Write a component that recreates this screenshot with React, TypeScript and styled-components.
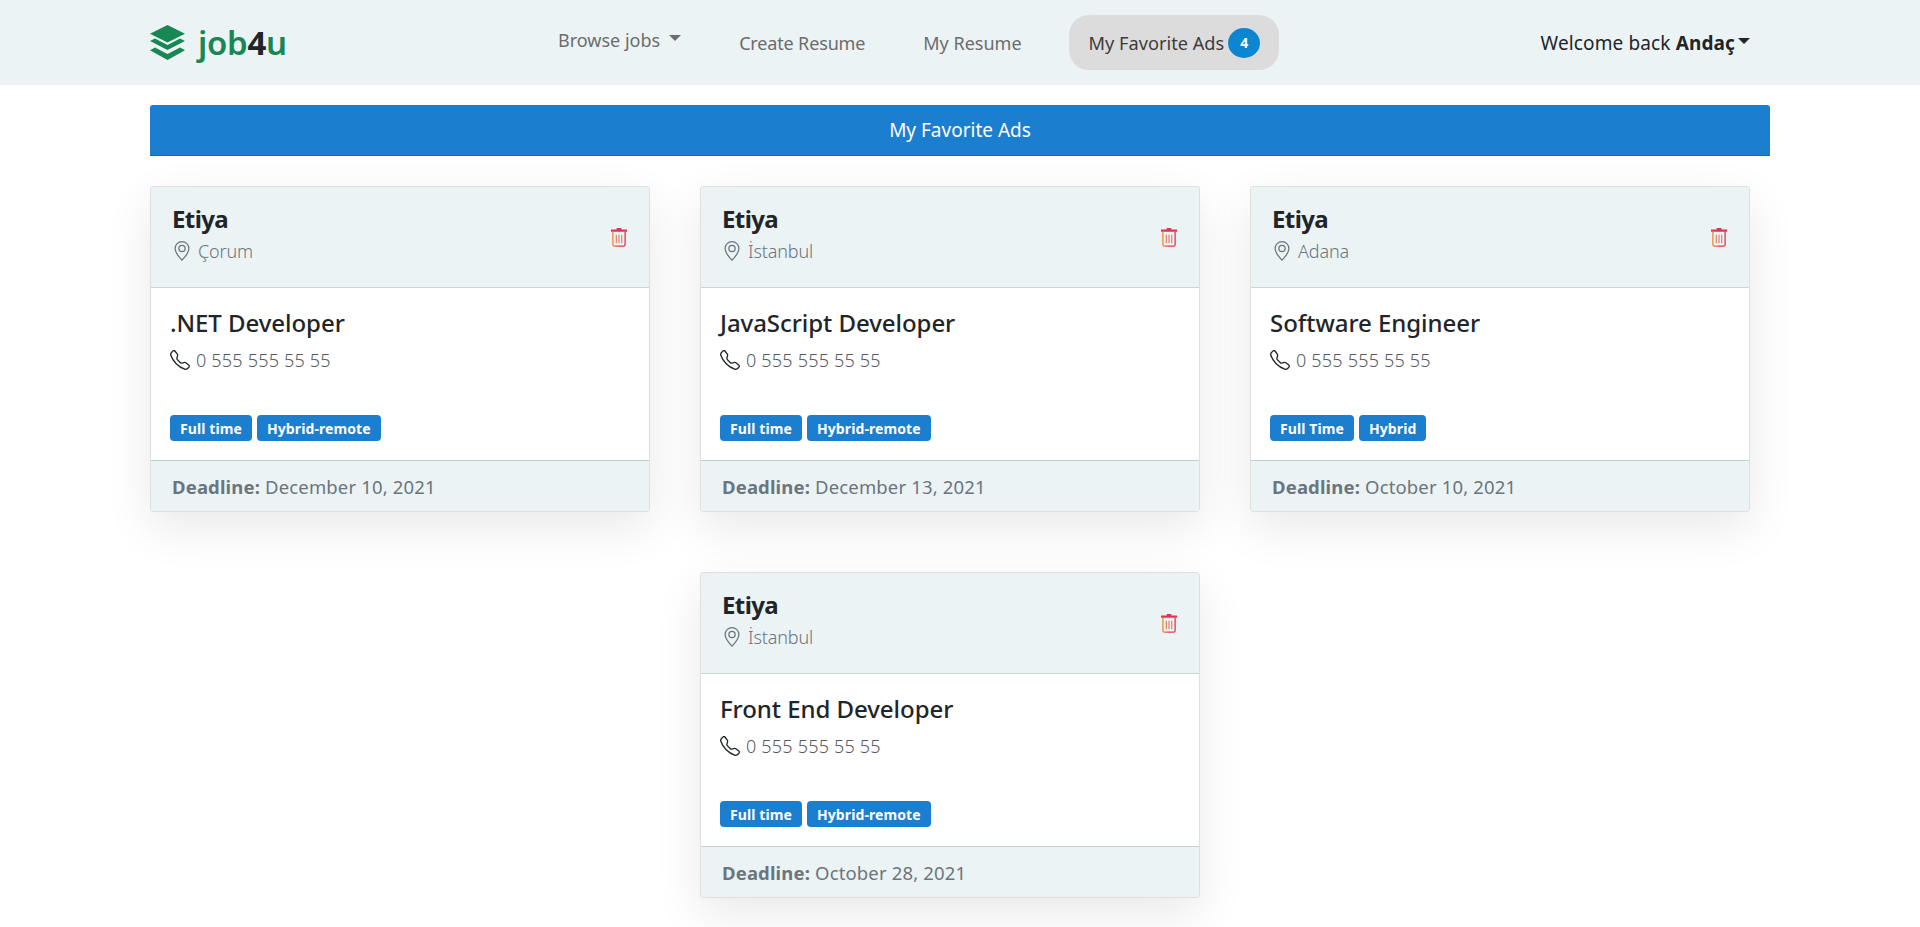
import React from "react";
import styled, { createGlobalStyle } from "styled-components";
import { BsGeoAlt, BsTelephone } from "react-icons/bs";

const Global = createGlobalStyle`
  * { box-sizing: border-box; }
  body { margin: 0; background: #fff; color: #212529; font-family: "Noto Sans", "Open Sans", sans-serif; font-size: 16px; }
`;

const NavBar = styled.nav`
  height: 85px;
  background: #ebf3f5;
  padding: 0 150px;
  display: flex;
  align-items: center;
`;
const Brand = styled.a`
  display: flex;
  align-items: center;
  gap: 13px;
  flex: 0 0 370px;
  font-size: 33px;
  font-weight: 600;
  color: #198754;
  letter-spacing: -0.3px;
`;
const Four = styled.span`
  color: #212529;
  font-weight: 700;
`;
const NavLinks = styled.div`
  display: flex;
  align-items: center;
`;
const NavLink = styled.a<{ $up?: boolean; $active?: boolean; $tight?: boolean }>`
  display: flex;
  align-items: center;
  font-size: ${(p) => (p.$active ? "18.2px" : "18px")};
  letter-spacing: ${(p) => (p.$tight ? "-0.15px" : "0")};
  color: ${(p) => (p.$active ? "#3f3b3b" : "#6c6c6c")};
  height: 55px;
  padding: ${(p) => (p.$active ? "0 19px 0 20px" : "0 20px")};
  margin-left: ${(p) => (p.$active ? "27px" : "18px")};
  border-radius: 20px;
  background: ${(p) => (p.$active ? "#dcdcdc" : "transparent")};
  transform: ${(p) => (p.$up ? "translateY(-3px)" : "none")};
`;
const Caret = styled.i<{ $dark?: boolean }>`
  display: inline-block;
  margin-left: ${(p) => (p.$dark ? "3px" : "9px")};
  margin-top: -4px;
  border-top: 6px solid ${(p) => (p.$dark ? "#212529" : "#6c6c6c")};
  border-left: 6px solid transparent;
  border-right: 6px solid transparent;
`;
const Badge = styled.span`
  width: 32px;
  height: 30px;
  margin-left: 4px;
  border-radius: 50%;
  background: #0d86d1;
  color: #fff;
  font-size: 14px;
  font-weight: 700;
  display: flex;
  align-items: center;
  justify-content: center;
`;
const UserMenu = styled.div`
  display: flex;
  align-items: center;
  margin-left: auto;
  margin-right: 20px;
  font-size: 19px;
  letter-spacing: 0.13px;
  color: #212529;
  b { font-weight: 700; margin-left: 5px; }
`;
const Main = styled.main`
  min-height: 842px;
  padding: 20px 150px 0;
`;
const Banner = styled.div`
  height: 51px;
  background: #1c7ecf;
  border-bottom: 1px solid #166ca8;
  border-radius: 3px 3px 0 0;
  color: #fff;
  font-size: 19px;
  display: flex;
  align-items: center;
  justify-content: center;
`;
const Grid = styled.div`
  width: 1600px;
  margin-top: 30px;
  display: flex;
  flex-wrap: wrap;
  justify-content: center;
  gap: 60px 50px;
`;
const Card = styled.article`
  width: 500px;
  height: 326px;
  border: 1px solid rgba(0, 0, 0, 0.125);
  border-radius: 4px;
  box-shadow: 0 16px 48px rgba(0, 0, 0, 0.09);
  background: #fff;
  display: flex;
  flex-direction: column;
`;
const CardHead = styled.header`
  height: 101px;
  background: #ebf3f5;
  border-bottom: 1px solid rgba(0, 0, 0, 0.125);
  border-radius: 3px 3px 0 0;
  padding: 0 22px 0 21px;
  display: flex;
  justify-content: space-between;
  align-items: center;
`;
const HeadText = styled.div`
  margin-top: -5px;
`;
const Company = styled.h4`
  margin: 0;
  font-size: 24px;
  line-height: 30px;
  font-weight: 700;
  letter-spacing: -0.6px;
`;
const Location = styled.div`
  display: flex;
  align-items: center;
  gap: 6px;
  margin-top: 2px;
  font-size: 18px;
  font-weight: 300;
  line-height: 30px;
  letter-spacing: -0.15px;
  color: #6c757d;
`;
const CardBody = styled.div`
  flex: 1;
  padding: 17px 20px 0 19px;
  display: flex;
  flex-direction: column;
`;
const Title = styled.h5`
  margin: 0;
  font-size: 24px;
  line-height: 36px;
  font-weight: 500;
  letter-spacing: -0.05px;
`;
const Phone = styled.div`
  display: flex;
  align-items: center;
  gap: 6px;
  margin-top: 1px;
  font-size: 18px;
  font-weight: 300;
  line-height: 36px;
  letter-spacing: 0.2px;
  color: #55595e;
`;
const Tags = styled.div`
  display: flex;
  gap: 5px;
  margin-top: 37px;
`;
const Tag = styled.span`
  height: 26px;
  padding: 0 10px;
  border-radius: 4px;
  background: #1c7ecf;
  color: #fff;
  font-size: 14px;
  font-weight: 700;
  letter-spacing: 0.1px;
  display: flex;
  align-items: center;
`;
const CardFoot = styled.footer`
  height: 51px;
  background: #ebf3f5;
  border-top: 1px solid rgba(0, 0, 0, 0.15);
  border-radius: 0 0 3px 3px;
  padding: 0 21px;
  display: flex;
  align-items: center;
  font-size: 18.5px;
  letter-spacing: 0.15px;
  color: #6c757d;
  b { font-weight: 700; margin-right: 5px; }
`;

const Logo = () => (
  <svg width="35" height="35" viewBox="0 0 35 35">
    <path fill="#198754" d="M17.5 0 35 8.7 17.5 17.5 0 8.7z" />
    <path fill="#198754" d="M5 13.6 17.5 20 30 13.6 35 16 17.5 25 0 16z" />
    <path fill="#198754" d="M5 22.6 17.5 29 30 22.6 35 25.2 17.5 35 0 25.2z" />
  </svg>
);

const Trash = () => (
  <svg width="16" height="19" viewBox="0 0 17 20" fill="none">
    <defs>
      <linearGradient id="trashGrad" x1="0" x2="1" y1="0" y2="0">
        <stop offset="0" stopColor="#f08a3c" />
        <stop offset="0.5" stopColor="#e8344e" />
        <stop offset="1" stopColor="#e8344e" />
      </linearGradient>
    </defs>
    <path fill="#e43350" d="M6 0h5v1.6h6V4H0V1.6h6z" />
    <path stroke="url(#trashGrad)" strokeWidth="1.4" d="M2 4v13.5c0 1 .6 1.7 1.6 1.7h9.8c1 0 1.6-.7 1.6-1.7V4" />
    <path stroke="#e0704f" strokeWidth="1.1" d="M5.6 7v9M8.5 7v9M11.4 7v9" />
  </svg>
);

type Ad = { city: string; title: string; type: string; mode: string; deadline: string };
const ads: Ad[] = [
  { city: "Çorum", title: ".NET Developer", type: "Full time", mode: "Hybrid-remote", deadline: "December 10, 2021" },
  { city: "İstanbul", title: "JavaScript Developer", type: "Full time", mode: "Hybrid-remote", deadline: "December 13, 2021" },
  { city: "Adana", title: "Software Engineer", type: "Full Time", mode: "Hybrid", deadline: "October 10, 2021" },
  { city: "İstanbul", title: "Front End Developer", type: "Full time", mode: "Hybrid-remote", deadline: "October 28, 2021" },
];

export default function App() {
  return (
    <>
      <Global />
      <NavBar>
        <Brand>
          <Logo />
          <span>
            job<Four>4</Four>u
          </span>
        </Brand>
        <NavLinks>
          <NavLink $up>
            Browse jobs
            <Caret />
          </NavLink>
          <NavLink $tight>Create Resume</NavLink>
          <NavLink>My Resume</NavLink>
          <NavLink $active>
            My Favorite Ads
            <Badge>4</Badge>
          </NavLink>
        </NavLinks>
        <UserMenu>
          Welcome back <b>Andaç</b>
          <Caret $dark />
        </UserMenu>
      </NavBar>
      <Main>
        <Banner>My Favorite Ads</Banner>
        <Grid>
          {ads.map((ad) => (
            <Card key={ad.title}>
              <CardHead>
                <HeadText>
                  <Company>Etiya</Company>
                  <Location>
                    <BsGeoAlt size={20} />
                    {ad.city}
                  </Location>
                </HeadText>
                <Trash />
              </CardHead>
              <CardBody>
                <Title>{ad.title}</Title>
                <Phone>
                  <BsTelephone size={20} color="#212529" />
                  0 555 555 55 55
                </Phone>
                <Tags>
                  <Tag>{ad.type}</Tag>
                  <Tag>{ad.mode}</Tag>
                </Tags>
              </CardBody>
              <CardFoot>
                <b>Deadline:</b> {ad.deadline}
              </CardFoot>
            </Card>
          ))}
        </Grid>
      </Main>
    </>
  );
}
